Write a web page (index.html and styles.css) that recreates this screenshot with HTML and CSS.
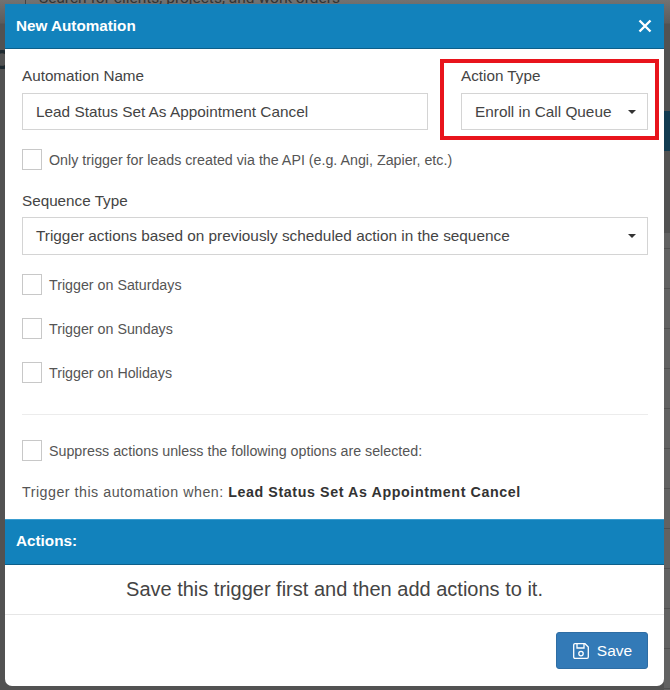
FILE: index.html
```html
<!DOCTYPE html>
<html>
  <head>
    <meta charset="utf-8">
    <title>New Automation</title>
    <link rel="stylesheet" href="styles.css">
  </head>
  <body>
    <div class="backdrop">
      <div class="bg-search">Search for clients, projects, and work orders</div>
      <div class="bg-letter">C</div>
      <div class="bg-band"></div>
      <div class="bg-rows"></div>
    </div>
    <div class="modal">
      <div class="modal-header">
        <h1>New Automation</h1>
        <svg class="close" width="14" height="14" viewBox="0 0 14 14"><path d="M1.5 1.5l11 11M12.500 1.500l-11 11" stroke="#fff" stroke-width="2.400" fill="none"/></svg>
      </div>
      <div class="modal-body">
        <div class="top-row">
          <div class="field">
            <label class="label">Automation Name</label>
            <div class="control">Lead Status Set As Appointment Cancel</div>
          </div>
          <div class="field">
            <label class="label">Action Type</label>
            <div class="control select">Enroll in Call Queue<span class="caret"></span></div>
          </div>
        </div>
        <div class="check first"><span class="box"></span>Only trigger for leads created via the API (e.g. Angi, Zapier, etc.)</div>
        <div class="field sequence">
          <label class="label">Sequence Type</label>
          <div class="control select">Trigger actions based on previously scheduled action in the sequence<span class="caret"></span></div>
        </div>
        <div class="checks">
          <div class="check"><span class="box"></span>Trigger on Saturdays</div>
          <div class="check"><span class="box"></span>Trigger on Sundays</div>
          <div class="check"><span class="box"></span>Trigger on Holidays</div>
        </div>
        <hr class="rule">
        <div class="check"><span class="box"></span>Suppress actions unless the following options are selected:</div>
        <p class="summary">Trigger this automation when: <b>Lead Status Set As Appointment Cancel</b></p>
      </div>
      <div class="actions-bar">Actions:</div>
      <div class="actions-empty">Save this trigger first and then add actions to it.</div>
      <div class="modal-footer">
        <button class="save">
          <svg width="18" height="18" viewBox="0 0 18 18" fill="none" stroke="#fff" stroke-width="1.300"><path d="M3 1.700h10l3.300 3.300v10a1.300 1.300 0 0 1-1.300 1.300H3a1.300 1.300 0 0 1-1.300-1.300V3A1.300 1.300 0 0 1 3 1.700z"/><path d="M5 1.700v4.300h7V1.700"/><circle cx="9" cy="11.600" r="2.200"/></svg>
          Save
        </button>
      </div>
      <div class="highlight"></div>
    </div>
  </body>
</html>
```

FILE: styles.css
```css
* {
  box-sizing: border-box;
}
html, body {
  margin: 0;
  height: 100%;
  overflow: hidden;
}
body {
  background: #585858;
  font-family: "Liberation Sans", Arial, sans-serif;
  font-size: 14px;
  color: #444;
}

/* dimmed page behind the modal */
.backdrop {
  position: absolute;
  top: 0;
  left: 0;
  width: 670px;
  height: 690px;
  overflow: hidden;
  background: linear-gradient(#727272, #5c5c5c 23px, #525252 24px, #525252);
}
.bg-search {
  position: absolute;
  top: -11px;
  left: 25px;
  padding-left: 13px;
  border-left: 1px solid #444;
  font-family: Roboto, sans-serif;
  font-size: 15.500px;
  color: #333;
}
.bg-letter {
  position: absolute;
  top: 44px;
  left: -9px;
  font-size: 28px;
  font-weight: bold;
  color: #1e2a30;
}
.bg-band {
  position: absolute;
  top: 111px;
  right: 0;
  width: 6px;
  height: 40px;
  background: #123c52;
}
.bg-rows {
  position: absolute;
  top: 233px;
  right: 0;
  width: 6px;
  bottom: 0;
  background: repeating-linear-gradient(#626262 0, #626262 15px, #505050 15px, #505050 16px, #626262 16px, #626262 40px);
  background-position: 0 0;
}

.modal {
  position: absolute;
  top: 4px;
  left: 5px;
  width: 659px;
  height: 682px;
  display: flex;
  flex-direction: column;
  background: #fff;
  border-radius: 0 0 7px 7px;
}
.modal-header {
  flex: none;
  height: 45px;
  display: flex;
  align-items: center;
  justify-content: space-between;
  padding: 0 12px 1px 11px;
  background: #1282bc;
  border-bottom: 1px solid #0d5f8a;
}
.modal-header h1 {
  margin: 0;
  font-size: 15.250px;
  font-weight: bold;
  color: #fff;
}
.modal-body {
  flex: none;
  height: 470px;
  padding: 18px 16px 0 17px;
}
.top-row {
  display: flex;
  gap: 33px;
}
.top-row .field:first-child {
  width: 406px;
}
.top-row .field:last-child {
  width: 187px;
}
.label {
  display: block;
  height: 24px;
  margin-bottom: 2px;
  font-size: 15.250px;
  line-height: 18px;
}
.control {
  position: relative;
  height: 37px;
  padding: 0 13px;
  border: 1px solid #d4d4d4;
  font-size: 15.350px;
  line-height: 35px;
  white-space: nowrap;
}
.caret {
  position: absolute;
  top: 16px;
  right: 11px;
  border-top: 4px solid #333;
  border-left: 4px solid transparent;
  border-right: 4px solid transparent;
}
.check {
  display: flex;
  align-items: center;
  gap: 7px;
  height: 21px;
  font-size: 14.250px;
  color: #555;
}
.box {
  flex: none;
  width: 20px;
  height: 21px;
  border: 1px solid #c8c8c8;
}
.check.first {
  margin-top: 19px;
}
.sequence {
  margin-top: 22px;
}
.sequence .label {
  margin-bottom: 1px;
}
.sequence .control {
  height: 38px;
}
.checks {
  display: flex;
  flex-direction: column;
  gap: 23px;
  margin-top: 19px;
}
.rule {
  margin: 31px 0 25px;
  border: 0;
  border-top: 1px solid #ececec;
}
.summary {
  margin: 22px 0 0;
  font-size: 14.250px;
  letter-spacing: 0.500px;
  line-height: 18px;
  white-space: nowrap;
  color: #555;
}
.summary b {
  color: #333;
  letter-spacing: 0.600px;
}
.actions-bar {
  flex: none;
  height: 46px;
  padding: 0 11px;
  background: #1282bc;
  border-top: 1px solid #3a9dd0;
  border-bottom: 1px solid #0d5f8a;
  font-size: 15.250px;
  font-weight: bold;
  line-height: 42px;
  color: #fff;
}
.actions-empty {
  flex: none;
  height: 50px;
  border-bottom: 1px solid #e6e6e6;
  text-align: center;
  font-size: 20px;
  line-height: 49px;
}
.modal-footer {
  flex: 1;
  display: flex;
  justify-content: flex-end;
  padding: 17px 16px 0 0;
}
.save {
  display: flex;
  align-items: center;
  justify-content: center;
  gap: 7px;
  width: 92px;
  height: 37px;
  padding: 0;
  background: #337ab7;
  border: 1px solid #2e6da4;
  border-radius: 3px;
  font-family: inherit;
  font-size: 15.500px;
  color: #fff;
}

/* red annotation box drawn over the Action Type field */
.highlight {
  position: absolute;
  top: 55px;
  left: 435px;
  width: 219px;
  height: 81px;
  border: 4px solid #e8141c;
}
```
